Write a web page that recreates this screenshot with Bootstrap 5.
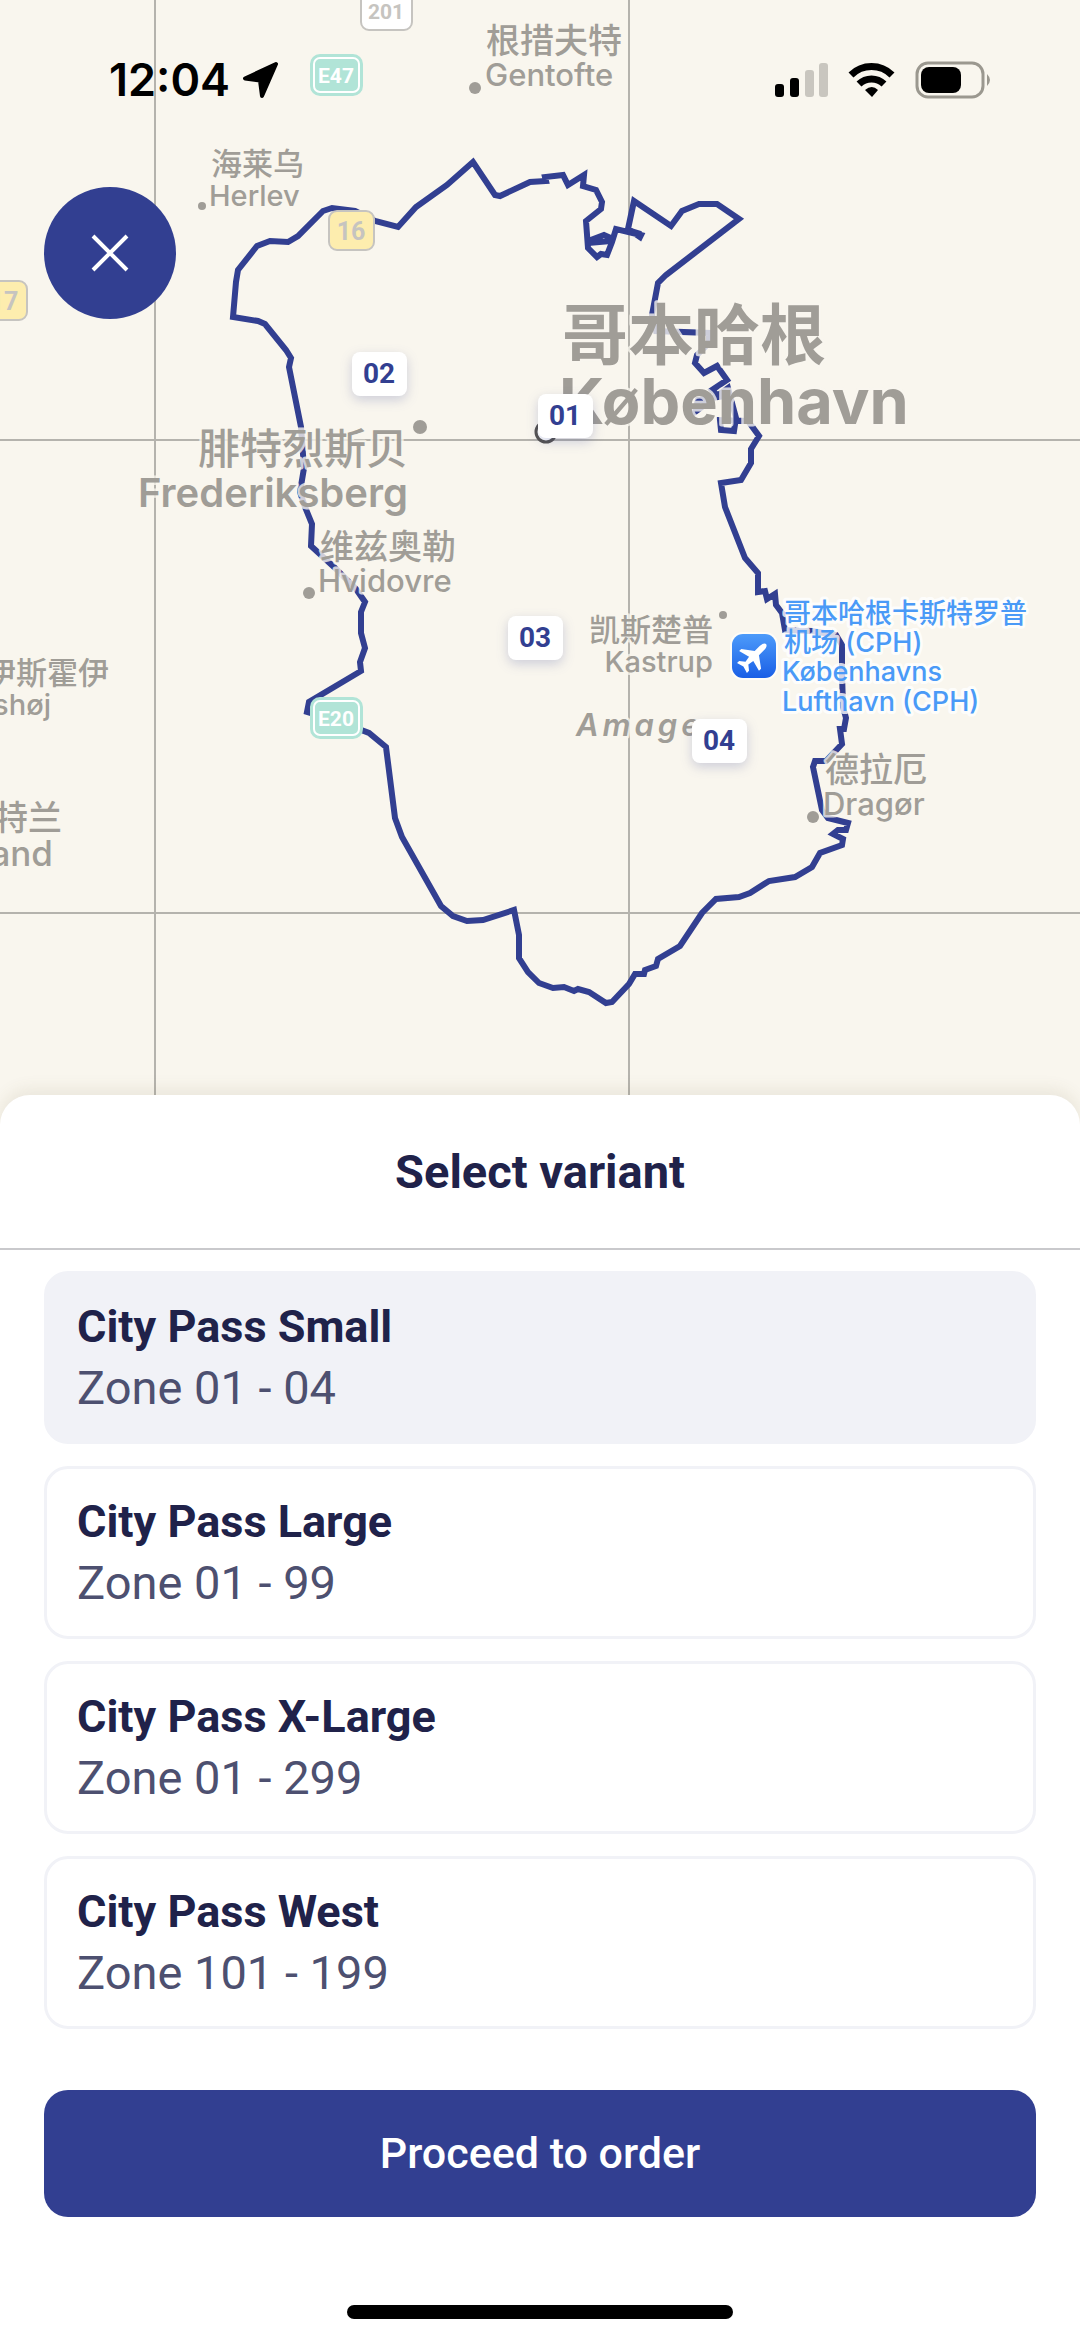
<!DOCTYPE html>
<html lang="en">
<head>
<meta charset="utf-8">
<meta name="viewport" content="width=device-width, initial-scale=1">
<title>Select variant</title>
<link href="https://cdn.jsdelivr.net/npm/bootstrap@5.3.0/dist/css/bootstrap.min.css" rel="stylesheet">
<style>
  :root { --brand: #323f91; --ink: #20224a; --soft: #4d5070; --tint: #f1f2f7; }
  body { font-family: Roboto, "Noto Sans CJK SC", sans-serif; color: var(--ink); background: #fff; }
  .map-area { background: #f9f6ee; }
  .map-canvas { display: block; width: 100%; height: auto; }
  .grid-line { stroke: #b5b3ad; stroke-width: 2; }
  .zone-border { fill: none; stroke: var(--brand); stroke-width: 6; stroke-linejoin: miter; }
  .place { font-family: Inter, "Noto Sans CJK SC", sans-serif; font-weight: 500; font-size: 31px; fill: #a09d97; stroke: #f9f6eec8; stroke-width: 5; paint-order: stroke; stroke-linejoin: round; }
  .place-s { font-size: 29px; }
  .place-zh { font-size: 34px; }
  .place-zh-s { font-size: 31px; }
  .place-l { font-size: 35px; }
  .place-xl { font-size: 40px; font-weight: 600; }
  .place-zh-xl { font-size: 42px; font-weight: 500; }
  .place-city { font-size: 63px; font-weight: 700; }
  .place-zh-city { font-size: 66px; font-weight: 700; }
  .place-island { font-size: 31px; font-weight: 600; font-style: italic; letter-spacing: 4px; }
  .place-air { font-size: 27px; fill: #4a9af7; stroke: #ffffffc8; stroke-width: 6; }
  .place-dot { fill: #a09d97; }
  .road-no { font-weight: 700; font-size: 25px; text-anchor: middle; fill: #c6c4c0; }
  .road-s { font-size: 21px; }
  .road-e { fill: #fff; }
  .pin-box { fill: #fff; filter: drop-shadow(0 4px 6px #32409138); }
  .pin-no { font-weight: 700; font-size: 28px; fill: var(--brand); text-anchor: middle; }
  .status-bar { padding: 52px 87px 0 109px; color: #000; }
  .status-left { gap: 12px; }
  .clock { font-family: Inter, sans-serif; font-weight: 600; font-size: 45px; line-height: 56px; }
  .btn-close-map { top: 187px; left: 44px; width: 132px; height: 132px; background: var(--brand); }
  .sheet { margin-top: -30px; border-radius: 30px 30px 0 0; box-shadow: 0 -6px 16px #6b5f3a1a; background: #fff; }
  .sheet-head { height: 155px; border-bottom: 2px solid #c9c9cc; }
  .sheet-title { font-size: 47px; line-height: 60px; font-weight: 700; }
  .variants { padding: 21px 44px 0; gap: 22px; }
  .variant { padding: 23px 30px; border: 3px solid var(--tint); border-radius: 24px; cursor: pointer; }
  .btn-check:checked + .variant { background: var(--tint); }
  .variant-name { font-size: 45px; line-height: 60px; font-weight: 700; }
  .variant-zones { font-size: 47px; line-height: 61px; color: var(--soft); }
  .actions { padding: 61px 44px 22px; gap: 88px; }
  .btn-order { height: 127px; border-radius: 24px; font-size: 43px; font-weight: 500; background: var(--brand); color: #fff; }
  .home-bar { width: 386px; height: 14px; background: #000; }
</style>
</head>
<body>
<main>
  <section class="map-area position-relative overflow-hidden">
    <svg class="map-canvas" viewBox="0 0 1080 1125" role="img" aria-label="Zone map">
      <defs>
        <linearGradient id="airFill" x1="0" y1="0" x2="0" y2="1"><stop offset="0" stop-color="#4d9bfa"/><stop offset="1" stop-color="#1a5fe6"/></linearGradient>
      </defs>
      <path class="grid-line" d="M155 0V1125M629 0V1125M0 440H1080M0 913H1080"/>

      <path class="zone-border" d="M233 317L236 282L238 270L257 246L270 241L288 242L298 236L323 211L332 208L355 211L375 221L398 227L416 207L447 185L473 162L495 195L500 196L530 182L546 181L545 177L563 175L568 185L584 175L583 186L596 190L602 202L601 209L586 221L588 248L597 257L601 254L607 255L612 242L616 229L641 235L640 237L628 229L634 201L671 226L682 211L699 204L717 204L739 219L666 275L658 283L652 315L656 331L709 333L709 343L697 355L695 363L704 373L717 366L727 380L712 390L719 397L698 400L695 412L728 388L736 418L734 431L721 430L720 420L748 421L759 436L751 449V463L741 480L721 483L725 507L745 558L758 573V592L765 591L767 599L775 594L776 605L782 613L785 630L812 631L836 635L842 645V673L843 707L846 718L844 729H840L842 744L826 761H815L813 767L822 810L828 818L848 823L846 830H838L833 834L843 839L842 845L820 853L812 867L795 877L769 881L750 893L739 897L716 899L702 913L680 946L658 959L656 966L645 970L644 974H635L629 984L612 1002L606 1003L589 992L578 989L574 991L564 987L553 988L539 983L528 972L519 958V935L514 910L483 920L467 921L453 916L441 906L402 837L395 818L386 747L369 733L340 722L307 712L309 702L361 671L360 662L365 648L361 633V612L365 602L356 589L334 567L311 546L312 524L305 507L300 492L304 468L301 427L289 367L291 358L286 350L265 324L258 321Z"/>
      <path class="zone-border" d="M588 243L611 241M588 241L604 235L613 239M628 230L641 234"/>

      <circle class="place-dot" cx="475" cy="88" r="6"/>
      <text class="place place-zh" x="486" y="53">根措夫特</text>
      <text class="place" x="485" y="86">Gentofte</text>

      <circle class="place-dot" cx="202" cy="206" r="4"/>
      <text class="place place-zh-s" x="211" y="175">海莱乌</text>
      <text class="place place-s" x="209" y="206">Herlev</text>

      <text class="place place-zh-city" x="562" y="359">哥本哈根</text>
      <text class="place place-city" x="559" y="424">København</text>

      <circle class="place-dot" cx="420" cy="427" r="7"/>
      <text class="place place-zh-xl" x="408" y="464" text-anchor="end">腓特烈斯贝</text>
      <text class="place place-xl" x="408" y="507" text-anchor="end">Frederiksberg</text>

      <circle class="place-dot" cx="309" cy="593" r="6"/>
      <text class="place place-zh" x="320" y="559">维兹奥勒</text>
      <text class="place" x="318" y="592">Hvidovre</text>

      <text class="place place-zh-s" x="109" y="684" text-anchor="end">伊斯霍伊</text>
      <text class="place place-s" x="51" y="715" text-anchor="end">Ishøj</text>

      <text class="place place-zh" x="62" y="830" text-anchor="end">斯特兰</text>
      <text class="place place-l" x="53" y="866" text-anchor="end">Strand</text>

      <circle class="place-dot" cx="723" cy="615" r="4"/>
      <text class="place place-zh-s" x="713" y="641" text-anchor="end">凯斯楚普</text>
      <text class="place place-s" x="713" y="672" text-anchor="end">Kastrup</text>

      <text class="place place-island" x="576" y="736">Amager</text>

      <circle class="place-dot" cx="813" cy="817" r="6"/>
      <text class="place place-zh" x="825" y="782">德拉厄</text>
      <text class="place" x="823" y="815">Dragør</text>

      <rect x="730" y="632" width="48" height="48" rx="13" fill="#fffdf8"/>
      <rect x="732" y="634" width="44" height="44" rx="11" fill="url(#airFill)"/>
      <g transform="translate(754 656) rotate(45)" fill="#fff">
        <path d="M0-17C2-17 3-14 3-11V-4L14 4V7L3 4L2 10L7 14V17L0 15L-7 17V14L-2 10L-3 4L-14 7V4L-3-4V-11C-3-14-2-17 0-17Z"/>
      </g>
      <text class="place place-air"><tspan x="784" y="623">哥本哈根卡斯特罗普</tspan><tspan x="784" y="652">机场 (CPH)</tspan><tspan x="782" y="681">Københavns</tspan><tspan x="782" y="711">Lufthavn (CPH)</tspan></text>

      <g fill="#fff" stroke="#c6c4c0" stroke-width="2">
        <rect x="361" y="-11" width="51" height="41" rx="8"/>
        <rect x="329" y="211" width="45" height="39" rx="8" fill="#fdedae"/>
        <rect x="-19" y="281" width="46" height="39" rx="8" fill="#fdedae"/>
      </g>
      <g fill="#b1e4d7" stroke="#b1e4d7" stroke-width="2">
        <rect x="311" y="55" width="51" height="40" rx="9"/>
        <rect x="311" y="698" width="51" height="40" rx="9"/>
        <rect x="314" y="58" width="45" height="34" rx="6" stroke="#fff"/>
        <rect x="314" y="701" width="45" height="34" rx="6" stroke="#fff"/>
      </g>
      <text class="road-no road-s" x="386" y="19">201</text>
      <text class="road-no" x="351" y="240">16</text>
      <text class="road-no" x="4" y="310">17</text>
      <text class="road-no road-s road-e" x="336" y="83">E47</text>
      <text class="road-no road-s road-e" x="336" y="726">E20</text>

      <circle cx="546" cy="432" r="10" fill="#fff" stroke="#55534f" stroke-width="3"/>
      <rect class="pin-box" x="352" y="352" width="55" height="44" rx="8"/>
      <rect class="pin-box" x="538" y="394" width="55" height="44" rx="8"/>
      <rect class="pin-box" x="508" y="616" width="55" height="44" rx="8"/>
      <rect class="pin-box" x="692" y="719" width="55" height="44" rx="8"/>
      <text class="pin-no" x="379" y="383">02</text>
      <text class="pin-no" x="565" y="425">01</text>
      <text class="pin-no" x="535" y="647">03</text>
      <text class="pin-no" x="719" y="750">04</text>
    </svg>

    <header class="status-bar position-absolute top-0 start-0 w-100 d-flex align-items-center justify-content-between">
      <div class="status-left d-flex align-items-center">
        <span class="clock">12:04</span>
        <svg width="38" height="38" viewBox="0 0 38 38" aria-hidden="true"><path d="M34 3L3 17.500L18 19.500L20 35Z" stroke="#000" stroke-width="4" stroke-linejoin="round"/></svg>
      </div>
      <svg width="218" height="38" viewBox="0 0 218 38" aria-hidden="true">
        <g><rect x="0" y="23" width="9" height="13" rx="3"/><rect x="15" y="17" width="9" height="19" rx="3"/></g>
        <g fill="#c9c6bf"><rect x="30" y="9" width="9" height="27" rx="3"/><rect x="44" y="2" width="9" height="34" rx="3"/></g>
        <g fill="none" stroke="#000" stroke-width="7"><path d="M76 14A29 29 0 0 1 117 14"/><path d="M84 23A18 18 0 0 1 109 23"/></g>
        <path d="M90 29Q97 23 103 29L97 36Z"/>
        <rect x="142" y="2" width="66" height="34" rx="11" fill="none" stroke="#9b988f" stroke-width="3"/>
        <rect x="146" y="6" width="40" height="26" rx="8"/>
        <path d="M212 13Q218 19 212 25Z" fill="#9b988f"/>
      </svg>
    </header>

    <button type="button" class="btn-close-map btn position-absolute rounded-circle d-flex align-items-center justify-content-center p-0" aria-label="Close">
      <svg width="38" height="38" viewBox="0 0 38 38" aria-hidden="true"><path d="M2 2L36 36M36 2L2 36" stroke="#fff" stroke-width="4"/></svg>
    </button>
  </section>

  <form class="sheet position-relative">
    <div class="sheet-head d-flex align-items-center justify-content-center">
      <h1 class="sheet-title m-0">Select variant</h1>
    </div>
    <div class="variants d-flex flex-column">
      <div>
        <input class="btn-check" type="radio" name="variant" id="passSmall" checked>
        <label class="variant d-block" for="passSmall"><span class="variant-name d-block">City Pass Small</span><span class="variant-zones d-block">Zone 01 - 04</span></label>
      </div>
      <div>
        <input class="btn-check" type="radio" name="variant" id="passLarge">
        <label class="variant d-block" for="passLarge"><span class="variant-name d-block">City Pass Large</span><span class="variant-zones d-block">Zone 01 - 99</span></label>
      </div>
      <div>
        <input class="btn-check" type="radio" name="variant" id="passXl">
        <label class="variant d-block" for="passXl"><span class="variant-name d-block">City Pass X-Large</span><span class="variant-zones d-block">Zone 01 - 299</span></label>
      </div>
      <div>
        <input class="btn-check" type="radio" name="variant" id="passWest">
        <label class="variant d-block" for="passWest"><span class="variant-name d-block">City Pass West</span><span class="variant-zones d-block">Zone 101 - 199</span></label>
      </div>
    </div>
    <div class="actions d-flex flex-column align-items-center">
      <button type="submit" class="btn btn-order w-100">Proceed to order</button>
      <div class="home-bar rounded-pill"></div>
    </div>
  </form>
</main>
<script src="https://cdn.jsdelivr.net/npm/bootstrap@5.3.0/dist/js/bootstrap.bundle.min.js"></script>
</body>
</html>
